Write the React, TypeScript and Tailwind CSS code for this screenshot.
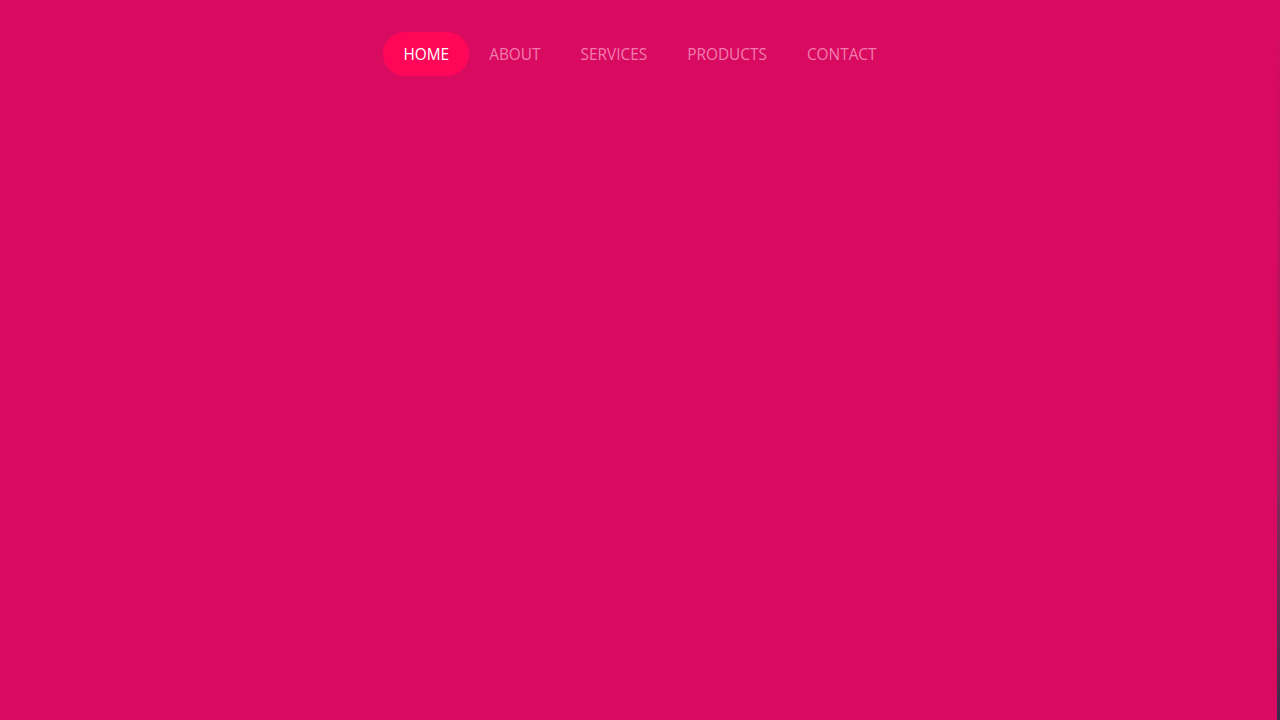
import React, { useState } from "react";

const items = ["HOME", "ABOUT", "SERVICES", "PRODUCTS", "CONTACT"];

export default function App() {
  const [active, setActive] = useState("HOME");

  return (
    <div
      className="relative flex h-[720px] w-full flex-col items-center overflow-hidden bg-[#d90b60]"
      style={{ fontFamily: '"Open Sans", "Noto Sans", sans-serif' }}
    >
      <nav className="mt-8 flex items-center">
        {items.map((item) => (
          <a
            key={item}
            href="#"
            onClick={(e) => {
              e.preventDefault();
              setActive(item);
            }}
            className={
              item === active
                ? "flex h-11 items-center rounded-full bg-[#ff0758] px-5 pt-[2px] text-[15.4px] text-white"
                : "flex h-11 items-center rounded-full px-5 pt-[2px] text-[15.4px] text-[#f27cb0]"
            }
          >
            {item}
          </a>
        ))}
      </nav>
      <div className="pointer-events-none absolute bottom-0 right-0 top-0 w-[3px] bg-gradient-to-b from-transparent via-[#b3125e] to-[#3a2a4a]" />
    </div>
  );
}
